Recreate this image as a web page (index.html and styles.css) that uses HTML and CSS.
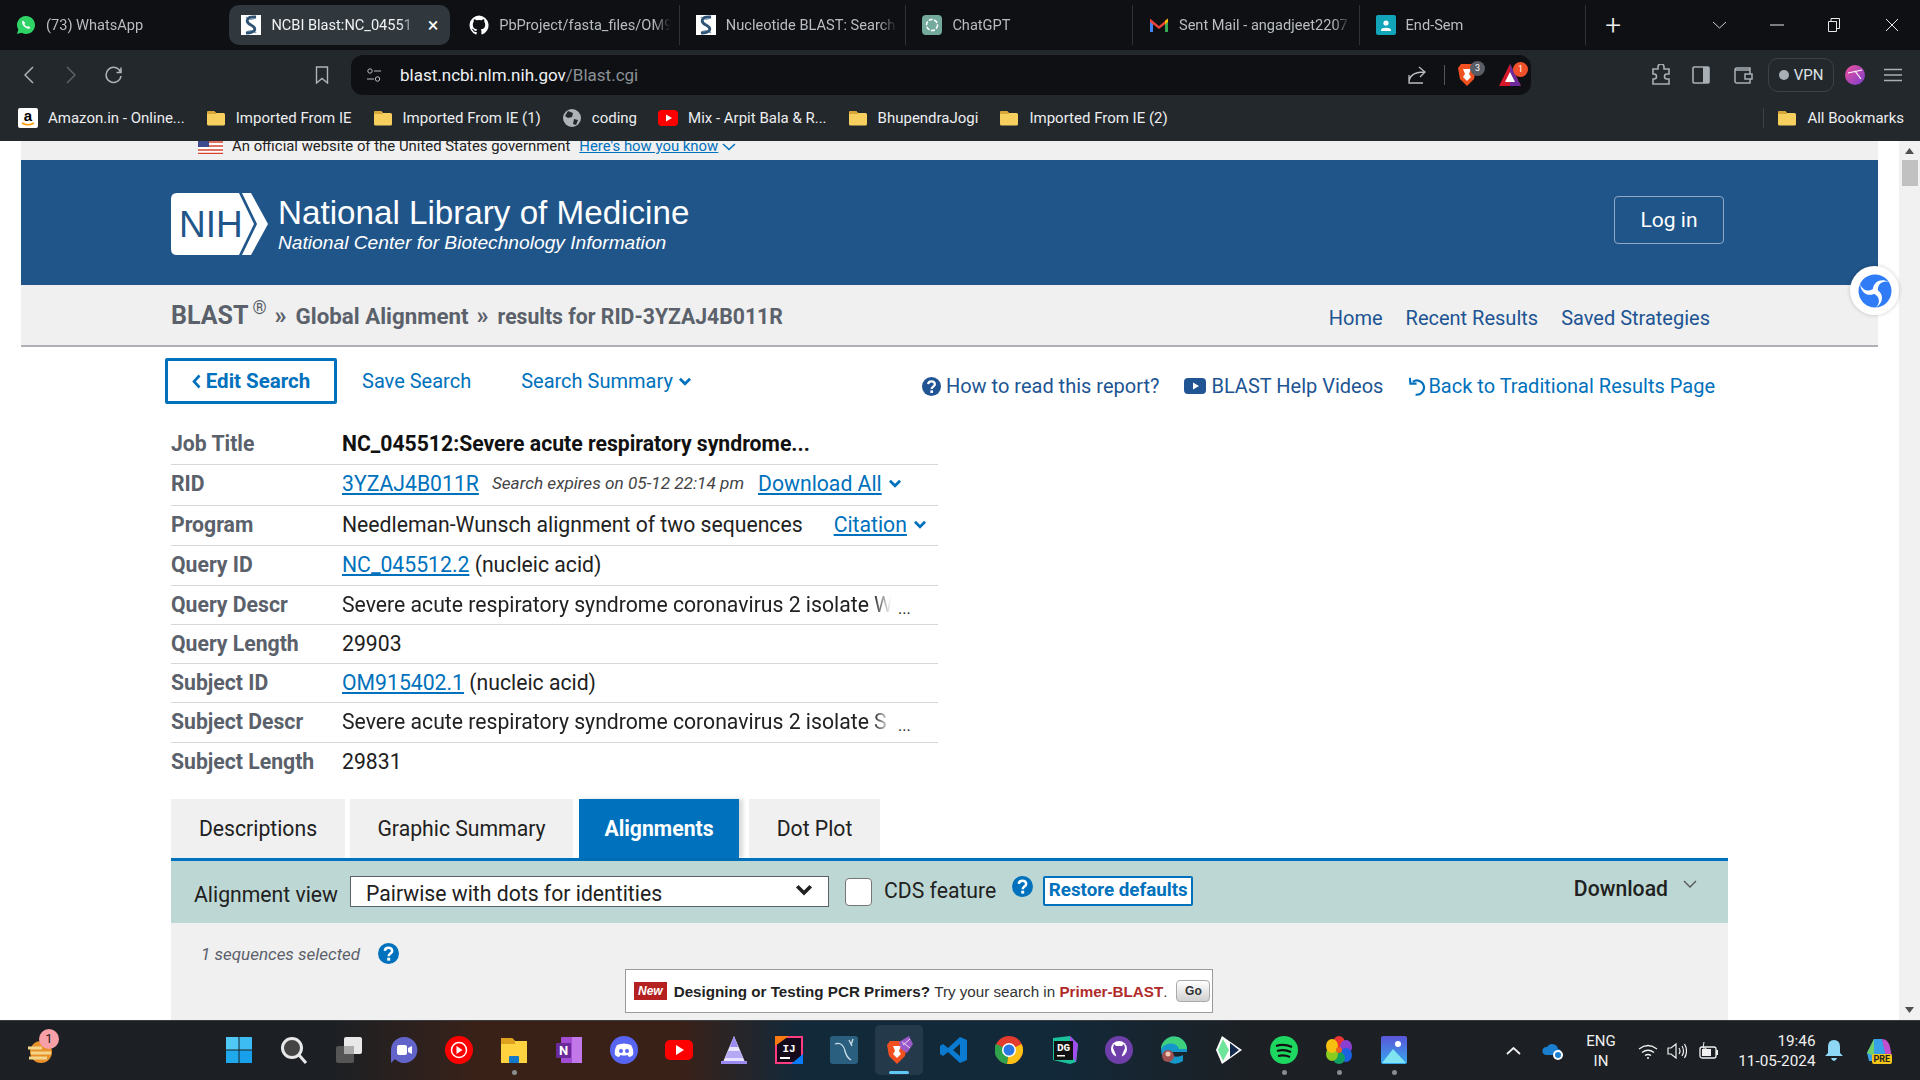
FILE: index.html
```html
<!DOCTYPE html>
<html lang="en">

<head>
    <meta charset="UTF-8">
    <title>NCBI Blast:NC_045512</title>
    <link rel="stylesheet" href="styles.css">
</head>

<body>
    <svg class="defs" width="0" height="0">
        <symbol id="dna" viewBox="0 0 20 20">
            <rect width="20" height="20" fill="#fff"/>
            <path d="M5 2C8 5 12 5 15 2M5 18C8 15 12 15 15 18" fill="none" stroke="#8aa0b4" stroke-width="1.600"/>
            <path d="M15 2C5 1 4 7 10 10S15 18 5 18" fill="none" stroke="#2f5475" stroke-width="2.800"/>
        </symbol>
        <symbol id="folder" viewBox="0 0 20 20">
            <path d="M1 4.500Q1 3 2.500 3H8l2 2h7.500Q19 5 19 6.500V16q0 1.500-1.500 1.500h-15Q1 17.500 1 16Z" fill="#f6cf5f"/>
            <path d="M1 4.500Q1 3 2.500 3H8l2 2v1H1Z" fill="#d9a63a"/>
        </symbol>
        <symbol id="help" viewBox="0 0 20 20">
            <circle cx="10" cy="10" r="10" fill="currentColor"/>
            <path d="M6.500 7.500C6.700 3.500 13.500 3.500 13.500 7.500c0 2.600-3.300 2.600-3.300 5" fill="none" stroke="#fff" stroke-width="2.400"/>
            <rect x="8.800" y="14" width="2.800" height="2.800" fill="#fff"/>
        </symbol>
        <symbol id="chev" viewBox="0 0 12 8">
            <path d="M1.500 1.500 6 6l4.500-4.500" fill="none" stroke="currentColor" stroke-width="2.400"/>
        </symbol>
    </svg>

    <!-- browser tabs -->
    <div class="tabstrip">
        <div class="tab">
            <svg class="tab-icon" viewBox="0 0 20 20"><path d="M10 1a9 9 0 0 0-7.700 13.600L1 19l4.500-1.200A9 9 0 1 0 10 1Z" fill="#2fd366"/><path d="M7 5.500c-2 1.500-.5 4.500 1.500 6.300s4.500 3 6 .9l-2.200-1.700-1.200.8c-1-.4-2.200-1.500-2.700-2.800l.9-1.100Z" fill="#fff"/></svg>
            <span class="tab-title">(73) WhatsApp</span>
        </div>
        <div class="tab tab-active">
            <svg class="tab-icon"><use href="#dna"/></svg>
            <span class="tab-title">NCBI Blast:NC_04551</span>
            <span class="tab-close">×</span>
        </div>
        <div class="tab tab-sep">
            <svg class="tab-icon" viewBox="0 0 20 20"><path d="M10 .5a9.800 9.800 0 0 0-3 19c.5.100.7-.2.700-.5v-2c-2.700.6-3.300-1.200-3.300-1.200-.5-1.100-1.100-1.400-1.100-1.400-.9-.6 0-.6 0-.6 1 .1 1.500 1 1.500 1 .9 1.500 2.300 1.100 2.900.8.100-.6.300-1.100.6-1.300-2.200-.3-4.500-1.100-4.500-4.900 0-1.100.4-2 1-2.600-.1-.3-.4-1.300.1-2.600 0 0 .8-.3 2.700 1a9.300 9.300 0 0 1 4.800 0c1.900-1.300 2.700-1 2.700-1 .5 1.300.2 2.300.1 2.600.6.700 1 1.500 1 2.600 0 3.800-2.300 4.600-4.500 4.900.4.300.7.900.7 1.800V19c0 .3.200.6.700.5A9.800 9.800 0 0 0 10 .5Z" fill="#fff"/></svg>
            <span class="tab-title">PbProject/fasta_files/OM9</span>
        </div>
        <div class="tab tab-sep">
            <svg class="tab-icon"><use href="#dna"/></svg>
            <span class="tab-title">Nucleotide BLAST: Search</span>
        </div>
        <div class="tab tab-sep">
            <svg class="tab-icon" viewBox="0 0 20 20"><rect width="20" height="20" rx="4" fill="#74aa9c"/><circle cx="10" cy="10" r="5.500" fill="none" stroke="#fff" stroke-width="1.500" stroke-dasharray="4 1.500"/></svg>
            <span class="tab-title">ChatGPT</span>
        </div>
        <div class="tab tab-sep">
            <svg class="tab-icon" viewBox="0 0 20 20"><path d="M1 17V5l3 1v11Z" fill="#4285f4"/><path d="M16 17V6l3-1v12Z" fill="#34a853"/><path d="M1 3.500 10 11l9-7.500V7l-9 7-9-7Z" fill="#ea4335"/><path d="M16 5.800 19 3.500V7l-3 2.300Z" fill="#fbbc04"/></svg>
            <span class="tab-title">Sent Mail - angadjeet2207</span>
        </div>
        <div class="tab tab-sep">
            <svg class="tab-icon" viewBox="0 0 20 20"><rect width="20" height="20" rx="2" fill="#12a4b8"/><circle cx="10" cy="8" r="2.600" fill="#fff"/><path d="M5 15c0-3 10-3 10 0v1H5Z" fill="#fff"/></svg>
            <span class="tab-title">End-Sem</span>
        </div>
        <div class="tab-plus">+</div>
        <div class="win-controls">
            <svg class="win-chev" width="15" height="8" viewBox="0 0 15 8"><path d="M1 1l6.500 6L14 1" fill="none" stroke="#c8ccd0"/></svg>
            <svg class="win-min" width="14" height="2" viewBox="0 0 14 2"><path d="M0 1h14" stroke="#e8e8e8"/></svg>
            <svg class="win-max" width="14" height="14" viewBox="0 0 14 14"><path d="M1.500 3.500h8v10h-8ZM4 3.500v-3h8.500v10h-3" fill="none" stroke="#e8e8e8"/></svg>
            <svg class="win-x" width="14" height="14" viewBox="0 0 14 14"><path d="M1 1l12 12M13 1 1 13" stroke="#e8e8e8"/></svg>
        </div>
    </div>

    <!-- toolbar -->
    <div class="toolbar">
        <svg class="tool-back" width="10" height="18" viewBox="0 0 10 18"><path d="M9 1 1 9l8 8" fill="none" stroke="#aeb4b9" stroke-width="1.500"/></svg>
        <svg class="tool-fwd" width="10" height="18" viewBox="0 0 10 18"><path d="M1 1l8 8-8 8" fill="none" stroke="#5d6368" stroke-width="1.500"/></svg>
        <svg class="tool-reload" width="18" height="18" viewBox="0 0 18 18"><path d="M15.500 6A7.500 7.500 0 1 0 16 10M16 1.500V6.500H11.500" fill="none" stroke="#aeb4b9" stroke-width="1.500"/></svg>
        <svg class="tool-mark" width="14" height="18" viewBox="0 0 14 18"><path d="M1.500 1h11v16L7 12.500 1.500 17Z" fill="none" stroke="#aeb4b9" stroke-width="1.400"/></svg>
        <div class="omnibox">
            <svg class="omni-tune" width="16" height="16" viewBox="0 0 16 16"><circle cx="4" cy="4" r="2.200" fill="none" stroke="#b8bcc0"/><path d="M8 4h7M1 12h7" stroke="#b8bcc0"/><circle cx="11.500" cy="12" r="2.200" fill="none" stroke="#b8bcc0"/></svg>
            <span class="omni-url">blast.ncbi.nlm.nih.gov<span class="omni-path">/Blast.cgi</span></span>
            <svg class="omni-share" width="20" height="20" viewBox="0 0 20 20"><path d="M2 10v8h14M2 18c0-7 5-11 15-11M12 2l6 5-5 5" fill="none" stroke="#b8bcc0" stroke-width="1.300"/></svg>
            <span class="omni-sep"></span>
            <span class="ext ext-brave">
                <svg width="20" height="26" viewBox="0 0 20 26"><path d="M4 2h12l3 4-2 11-7 7-7-7L1 6Z" fill="#f1501f"/><path d="M6 7h8l-2 5 2 3-4 4-4-4 2-3Z" fill="#fff"/></svg>
                <span class="badge badge-gray">3</span>
            </span>
            <span class="ext ext-rewards">
                <svg width="22" height="24" viewBox="0 0 22 24"><path d="M11 1 22 23H0Z" fill="#d6182c"/><path d="M11 1 22 23H11Z" fill="#6d2a9c"/><path d="M11 9l5 10H6Z" fill="#fff"/></svg>
                <span class="badge badge-red">1</span>
            </span>
        </div>
        <svg class="tool-puzzle" width="20" height="22" viewBox="0 0 20 22"><path d="M7 3a3 3 0 0 1 6 0v2h5v5h-2a2.500 2.500 0 0 0 0 5h2v5H2v-5h1a2.500 2.500 0 0 0 0-5H2V5h5Z" fill="none" stroke="#a8b0b6" stroke-width="1.600"/></svg>
        <svg class="tool-side" width="18" height="18" viewBox="0 0 18 18"><rect x="1" y="1" width="16" height="16" rx="1" fill="none" stroke="#a8b0b6" stroke-width="1.600"/><rect x="11" y="1" width="6" height="16" fill="#a8b0b6"/></svg>
        <svg class="tool-wallet" width="19" height="18" viewBox="0 0 19 18"><path d="M16 4V2H3Q1 2 1 4v11q0 2 2 2h13v-4M1 4h15v4M11 8h7v5h-7Z" fill="none" stroke="#a8b0b6" stroke-width="1.500"/></svg>
        <div class="vpn"><span class="vpn-dot"></span>VPN</div>
        <svg class="tool-avatar" width="20" height="20" viewBox="0 0 20 20"><defs><linearGradient id="ava" x1="0" y1="0" x2="1" y2="1"><stop offset="0" stop-color="#f0509a"/><stop offset="1" stop-color="#7a3fd0"/></linearGradient></defs><circle cx="10" cy="10" r="10" fill="url(#ava)"/><path d="M3 8l14-3M10 6l6 8" stroke="#fff" stroke-width="1.200"/></svg>
        <svg class="tool-menu" width="18" height="14" viewBox="0 0 18 14"><path d="M0 1.500h18M0 7h18M0 12.500h18" stroke="#a8b0b6" stroke-width="1.500"/></svg>
    </div>

    <!-- bookmarks -->
    <div class="bookmarks">
        <div class="bm bm-first">
            <svg class="bm-icon" viewBox="0 0 20 20"><rect width="20" height="20" rx="2" fill="#fff"/><text x="10" y="13" text-anchor="middle" class="bm-a">a</text><path d="M4 15q6 3.500 12 0" fill="none" stroke="#f90" stroke-width="1.500"/></svg>
            Amazon.in - Online...
        </div>
        <div class="bm"><svg class="bm-icon"><use href="#folder"/></svg>Imported From IE</div>
        <div class="bm"><svg class="bm-icon"><use href="#folder"/></svg>Imported From IE (1)</div>
        <div class="bm">
            <svg class="bm-icon" viewBox="0 0 20 20"><circle cx="10" cy="10" r="9" fill="#aeb3b8"/><path d="M6 3l5 2-1 4-4 1-3-2ZM12 11l4 1-2 5-3-1Z" fill="#23282c"/></svg>
            coding
        </div>
        <div class="bm">
            <svg class="bm-icon" viewBox="0 0 20 20"><rect y="2" width="20" height="16" rx="4" fill="#f00"/><path d="M8 6.500 14 10l-6 3.500Z" fill="#fff"/></svg>
            Mix - Arpit Bala &amp; R...
        </div>
        <div class="bm"><svg class="bm-icon"><use href="#folder"/></svg>BhupendraJogi</div>
        <div class="bm"><svg class="bm-icon"><use href="#folder"/></svg>Imported From IE (2)</div>
        <div class="bm bm-all"><svg class="bm-icon"><use href="#folder"/></svg>All Bookmarks</div>
    </div>

    <div class="viewport">
        <div class="page">
            <div class="gov-banner">
                <svg width="25" height="13" viewBox="0 0 25 13"><rect width="25" height="13" fill="#fff"/><path d="M0 1h25M0 5h25M0 9h25M0 12.500h25" stroke="#d8402f" stroke-width="1.600"/><rect width="11" height="6" fill="#3c4a90"/></svg>
                <span>An official website of the United States government</span>
                <a class="gov-link">Here's how you know</a>
                <svg class="gov-chev" width="14" height="8" viewBox="0 0 14 8"><path d="M1 1l6 5.500L13 1" fill="none" stroke="currentColor" stroke-width="1.500"/></svg>
            </div>

            <div class="nih-header">
                <div class="nih-logo">
                    <svg width="98" height="62" viewBox="0 0 98 62">
                        <path d="M6 0H68L83 31 68 62H6Q0 62 0 56V6Q0 0 6 0Z" fill="#fff"/>
                        <path d="M71 0H80L97 31 80 62H71L86 31Z" fill="#fff"/>
                        <text x="8" y="44" class="nih-mark">NIH</text>
                    </svg>
                    <div class="nih-names">
                        <div class="nih-title">National Library of Medicine</div>
                        <div class="nih-sub">National Center for Biotechnology Information</div>
                    </div>
                </div>
                <button class="login">Log in</button>
            </div>

            <div class="crumbs">
                <div class="crumb-text">
                    <span class="crumb-blast">BLAST</span><sup class="crumb-reg">®</sup>
                    <span class="crumb-sep">»</span>
                    <span class="crumb-page">Global Alignment</span>
                    <span class="crumb-sep">»</span>
                    <span class="crumb-rid">results for RID-3YZAJ4B011R</span>
                </div>
                <nav class="crumb-nav">
                    <a>Home</a>
                    <a>Recent Results</a>
                    <a>Saved Strategies</a>
                </nav>
            </div>

            <div class="actions">
                <div class="actions-left">
                    <a class="edit-btn"><svg width="9" height="15" viewBox="0 0 9 15"><path d="M7.500 1.500 2 7.500l5.500 6" fill="none" stroke="currentColor" stroke-width="2.600"/></svg>Edit Search</a>
                    <a class="act-link act-save">Save Search</a>
                    <a class="act-link act-summary">Search Summary <svg class="summary-chev" width="14" height="9"><use href="#chev"/></svg></a>
                </div>
                <div class="actions-right">
                    <a class="help-link"><svg class="ico-help" width="19" height="19"><use href="#help"/></svg>How to read this report?</a>
                    <a class="help-link"><svg class="ico-play" width="22" height="16" viewBox="0 0 22 16"><rect width="22" height="16" rx="4" fill="currentColor"/><path d="M9 4.500 15 8l-6 3.500Z" fill="#fff"/></svg>BLAST Help Videos</a>
                    <a class="help-link back-link"><svg width="20" height="21" viewBox="0 0 21 21"><path d="M5 5.500A7.500 7.500 0 1 1 8 19M2 1.500 2.500 7.500H9" fill="none" stroke="currentColor" stroke-width="2.200"/></svg>Back to Traditional Results Page</a>
                </div>
            </div>

            <div class="summary">
                <div class="row row-top"><div class="label">Job Title</div><div class="value value-title">NC_045512:Severe acute respiratory syndrome...</div></div>
                <div class="row row-l">
                    <div class="label">RID</div>
                    <div class="value"><a class="link">3YZAJ4B011R</a><span class="expires">Search expires on 05-12 22:14 pm</span><a class="link">Download All</a><svg class="link-chev" width="14" height="9"><use href="#chev"/></svg></div>
                </div>
                <div class="row row-m">
                    <div class="label">Program</div>
                    <div class="value"><span>Needleman-Wunsch alignment of two sequences</span><a class="link link-citation">Citation</a><svg class="link-chev" width="14" height="9"><use href="#chev"/></svg></div>
                </div>
                <div class="row row-m"><div class="label">Query ID</div><div class="value"><a class="link">NC_045512.2</a><span>&nbsp;(nucleic acid)</span></div></div>
                <div class="row">
                    <div class="label">Query Descr</div>
                    <div class="value"><span class="fade">Severe acute respiratory syndrome coronavirus 2 isolate W</span><span class="dots">...</span></div>
                </div>
                <div class="row"><div class="label">Query Length</div><div class="value">29903</div></div>
                <div class="row"><div class="label">Subject ID</div><div class="value"><a class="link">OM915402.1</a><span>&nbsp;(nucleic acid)</span></div></div>
                <div class="row row-m">
                    <div class="label">Subject Descr</div>
                    <div class="value"><span class="fade">Severe acute respiratory syndrome coronavirus 2 isolate S</span><span class="dots">...</span></div>
                </div>
                <div class="row row-last"><div class="label">Subject Length</div><div class="value">29831</div></div>
            </div>

            <div class="results">
                <div class="result-tabs">
                    <div class="rtab rtab-desc">Descriptions</div>
                    <div class="rtab rtab-graphic">Graphic Summary</div>
                    <div class="rtab rtab-align">Alignments</div>
                    <div class="rtab rtab-dot">Dot Plot</div>
                </div>
                <div class="view-bar">
                    <span class="view-label">Alignment view</span>
                    <div class="view-select"><span>Pairwise with dots for identities</span><svg width="18" height="12" viewBox="0 0 12 8"><use href="#chev"/></svg></div>
                    <span class="view-check"></span>
                    <span class="view-cds">CDS feature</span>
                    <svg class="view-help" width="21" height="21"><use href="#help"/></svg>
                    <a class="restore">Restore defaults</a>
                    <span class="view-download">Download</span>
                    <svg class="view-chev" width="14" height="8" viewBox="0 0 14 8"><path d="M1 1l6 6 6-6" fill="none" stroke="#555" stroke-width="1.300"/></svg>
                </div>
                <div class="result-body">
                    <div class="selected">
                        <em>1 sequences selected</em>
                        <svg class="sel-help" width="21" height="21"><use href="#help"/></svg>
                    </div>
                    <div class="promo"><span class="promo-new">New</span><b>Designing or Testing PCR Primers?</b><span>&nbsp;Try your search in&nbsp;</span><b class="promo-red">Primer-BLAST</b><span>.</span><span class="promo-go">Go</span></div>
                </div>
            </div>
        </div>

        <div class="scrollbar">
            <svg width="9" height="6" viewBox="0 0 9 6"><path d="M4.500 0 9 6H0Z" fill="#505050"/></svg>
            <div class="scroll-thumb"></div>
            <svg class="scroll-down" width="9" height="6" viewBox="0 0 9 6"><path d="M0 0h9L4.500 6Z" fill="#505050"/></svg>
        </div>

        <div class="float-btn">
            <svg width="34" height="34" viewBox="0 0 34 34">
                <circle cx="17" cy="17" r="16.500" fill="#2f7cf6"/>
                <path id="swirl" d="M15 17C14 9 22 3 31 8 25 6 19 10 20 17Z" fill="#fff"/>
                <path d="M15 17C14 9 22 3 31 8 25 6 19 10 20 17Z" fill="#fff" transform="rotate(120 17 17)"/>
                <path d="M15 17C14 9 22 3 31 8 25 6 19 10 20 17Z" fill="#fff" transform="rotate(240 17 17)"/>
            </svg>
        </div>
    </div>

    <!-- windows taskbar -->
    <div class="taskbar">
        <div class="widget">
            <svg width="30" height="28" viewBox="0 0 30 28"><circle cx="16" cy="17" r="11" fill="#e8912b"/><path d="M3 13h14M6 18h20M4 23h18" stroke="#f4d58c" stroke-width="3"/></svg>
            <span class="badge badge-pink">1</span>
        </div>
        <div class="tb-icons">
            <div class="tb-item"><svg viewBox="0 0 28 28"><rect x="1" y="1" width="12.500" height="12.500" fill="#4fc8f5"/><rect x="14.500" y="1" width="12.500" height="12.500" fill="#3cbcf2"/><rect x="1" y="14.500" width="12.500" height="12.500" fill="#20a8ec"/><rect x="14.500" y="14.500" width="12.500" height="12.500" fill="#18a0ea"/></svg></div>
            <div class="tb-item"><svg viewBox="0 0 28 28"><circle cx="12" cy="12" r="9.500" fill="#444" stroke="#e8e8e8" stroke-width="3"/><path d="M19 19l7 8" stroke="#e8e8e8" stroke-width="3"/></svg></div>
            <div class="tb-item"><svg viewBox="0 0 28 28"><rect x="1" y="10" width="18" height="17" rx="2" fill="#555"/><rect x="9" y="1" width="18" height="17" rx="2" fill="#e8e8e8"/><rect x="9" y="10" width="10" height="8" fill="#aaa"/></svg></div>
            <div class="tb-item"><svg viewBox="0 0 28 28"><path d="M14 1a13 13 0 1 1-9 22l-4 4V14A13 13 0 0 1 14 1Z" fill="#6264c9"/><rect x="7" y="9" width="10" height="10" rx="2" fill="#fff"/><path d="M18 12l4-2v8l-4-2Z" fill="#fff"/></svg></div>
            <div class="tb-item"><svg viewBox="0 0 28 28"><circle cx="14" cy="14" r="14" fill="#f00"/><circle cx="14" cy="14" r="7.500" fill="none" stroke="#fff" stroke-width="1.500"/><path d="M11.500 10l6 4-6 4Z" fill="#fff"/></svg></div>
            <div class="tb-item"><svg viewBox="0 0 28 28"><path d="M1 2h11l3 3h12v22H1Z" fill="#ffd23f"/><path d="M1 2h11l3 3v3H1Z" fill="#e0a020"/><rect x="9" y="20" width="10" height="7" rx="1" fill="#1478c8"/></svg><span class="tb-dot"></span></div>
            <div class="tb-item"><svg viewBox="0 0 28 28"><rect x="6" y="1" width="21" height="26" rx="1" fill="#a44cd3"/><rect x="17" y="1" width="10" height="26" fill="#c278e8"/><rect x="1" y="7" width="15" height="15" rx="1" fill="#6a2a9a"/><text x="8.500" y="19" text-anchor="middle" class="tb-letter">N</text></svg></div>
            <div class="tb-item"><svg viewBox="0 0 28 28"><circle cx="14" cy="14" r="14" fill="#5865f2"/><path d="M7 9q7-3 14 0 3 5 2 10-2 2-4 2l-1.500-2q-3.500 1-7 0L9 21q-2 0-4-2-1-5 2-10Z" fill="#fff"/><circle cx="11" cy="15" r="2" fill="#5865f2"/><circle cx="17" cy="15" r="2" fill="#5865f2"/></svg></div>
            <div class="tb-item"><svg viewBox="0 0 28 28"><rect x="0" y="4" width="28" height="20" rx="5" fill="#f00"/><path d="M11 9l8 5-8 5Z" fill="#fff"/></svg></div>
            <div class="tb-item"><svg viewBox="0 0 28 28"><path d="M14 0 25 26H3Z" fill="#e8e4ff"/><path d="M14 0 18 11H10Z" fill="#9b8bf0"/><path d="M8 15h12l3 7H5Z" fill="#b5a8f5"/><rect x="1" y="25" width="26" height="3" fill="#9b8bf0"/></svg></div>
            <div class="tb-item"><svg viewBox="0 0 28 28"><rect width="28" height="28" fill="#ff3c80"/><rect x="2" y="2" width="24" height="24" fill="#15091c"/><path d="M0 10V0h14Z" fill="#f97a12"/><path d="M28 18v10H16Z" fill="#087cfa"/><rect x="5" y="21" width="10" height="2" fill="#fff"/><text x="14" y="16" text-anchor="middle" class="tb-mono">IJ</text></svg></div>
            <div class="tb-item"><svg viewBox="0 0 28 28"><rect width="28" height="28" rx="3" fill="#2a5f7f"/><path d="M5 8c6-2 9 2 10 7s3 7 6 9M19 4l3 6M23 3l-2 6" fill="none" stroke="#cfe0ea" stroke-width="1.300"/></svg></div>
            <div class="tb-item tb-active"><svg viewBox="0 0 28 28"><path d="M5 5h14l3 4-2 11-8 8-8-8-2-11Z" fill="#f1501f"/><path d="M8 10h8l-2 5 2 3-4 4-4-4 2-3Z" fill="#fff"/><path d="M14 6 24 0l4 8-6 9-6-4Z" fill="#9a59c8"/><path d="M17 6l8 6M25 3l-7 6" stroke="#e8d6f5"/></svg><span class="tb-bar"></span></div>
            <div class="tb-item"><svg viewBox="0 0 28 28"><path d="M20 1 27 4v20l-7 3L8 16l-5 4-3-2V10l3-2 5 4Zm0 7-7 6 7 6Z" fill="#0a7bd0"/></svg></div>
            <div class="tb-item"><svg viewBox="0 0 28 28"><circle cx="14" cy="14" r="14" fill="#e33b2e"/><path d="M14 14 26.500 8A14 14 0 0 1 12 28Z" fill="#fbc116"/><path d="M14 14 12 28A14 14 0 0 1 1 8Z" fill="#2fa24c"/><circle cx="14" cy="14" r="7" fill="#fff"/><circle cx="14" cy="14" r="5.500" fill="#2b78e4"/></svg></div>
            <div class="tb-item"><svg viewBox="0 0 28 28"><path d="M3 2 20 0l8 8-2 18-6 2L3 24Z" fill="#19c29a"/><path d="M20 0l8 8-2 18-6-8Z" fill="#a24cf0"/><rect x="4" y="5" width="19" height="19" fill="#111"/><text x="13.500" y="15" text-anchor="middle" class="tb-mono">DG</text><rect x="7" y="19" width="8" height="1.500" fill="#fff"/></svg></div>
            <div class="tb-item"><svg viewBox="0 0 28 28"><circle cx="14" cy="14" r="14" fill="#6e3fa8"/><circle cx="14" cy="13" r="8" fill="#fff"/><path d="M9 8l2 2h6l2-2 1 4-3 7v5h-6v-5l-3-7Z" fill="#6e3fa8"/></svg></div>
            <div class="tb-item"><svg viewBox="0 0 28 28"><path d="M1 14A13 13 0 0 1 27 13v3H10c1 5 8 6 13 3v6A14 14 0 0 1 1 14Z" fill="#1598c9"/><path d="M1 14C3 6 17 5 19 13H27A13 13 0 0 0 1 14Z" fill="#3fd07e"/><circle cx="8" cy="20" r="6" fill="#a05050"/><circle cx="8" cy="18" r="2.500" fill="#f0c8b0"/></svg></div>
            <div class="tb-item"><svg viewBox="0 0 28 28"><path d="M7 0 27 14 7 28 1 14Z" fill="#fff"/><path d="M8 3 14 14 8 25 3 14Z" fill="#6ee59a"/><path d="M15 7 24 14 15 21Z" fill="#13294b"/></svg></div>
            <div class="tb-item"><svg viewBox="0 0 28 28"><circle cx="14" cy="14" r="14" fill="#1ed760"/><path d="M6 10q8-2.500 16 1M7 15q7-2 14 1M8 20q6-1.500 12 1" fill="none" stroke="#111" stroke-width="2.300"/></svg><span class="tb-dot"></span></div>
            <div class="tb-item"><svg viewBox="0 0 28 28"><ellipse cx="14" cy="7" rx="6" ry="7" fill="#e33"/><ellipse cx="21" cy="11" rx="6" ry="7" fill="#8a3fd0"/><ellipse cx="21" cy="19" rx="6" ry="7" fill="#1a62e0"/><ellipse cx="14" cy="22" rx="6" ry="6" fill="#10a060"/><ellipse cx="7" cy="18" rx="6" ry="7" fill="#8acb20"/><ellipse cx="7" cy="10" rx="6" ry="7" fill="#f8c010"/><circle cx="14" cy="14" r="3" fill="#f06020"/></svg><span class="tb-dot"></span></div>
            <div class="tb-item"><svg viewBox="0 0 28 28"><defs><linearGradient id="pics" x1="0" y1="0" x2="0" y2="1"><stop offset="0" stop-color="#5a55d8"/><stop offset="1" stop-color="#35a8ee"/></linearGradient></defs><rect x="1" y="0" width="26" height="28" rx="2" fill="url(#pics)"/><circle cx="18" cy="8" r="3" fill="#fff"/><path d="M2 27 13 13l13 14Z" fill="#7fe3f2"/></svg><span class="tb-dot"></span></div>
        </div>
        <div class="tray">
            <svg class="tray-caret" width="15" height="9" viewBox="0 0 15 9"><path d="M1 8l6.500-6L14 8" fill="none" stroke="#f0f0f0" stroke-width="1.800"/></svg>
            <svg class="tray-cloud" width="22" height="20" viewBox="0 0 22 20"><path d="M4 14a4 4 0 0 1 1-8 6 6 0 0 1 11 2 3 3 0 0 1 0 6Z" fill="#1b7fd0"/><circle cx="16" cy="14" r="5" fill="#fff"/><circle cx="16" cy="14" r="3" fill="#1b7fd0"/></svg>
            <div class="tray-lang"><span>ENG</span><span>IN</span></div>
            <svg class="tray-wifi" width="20" height="16" viewBox="0 0 20 16"><path d="M1 6q9-7 18 0M4 9.500q6-4.500 12 0M7 12.500q3-2 6 0" fill="none" stroke="#f0f0f0" stroke-width="1.400"/><circle cx="10" cy="15" r="1" fill="#f0f0f0"/></svg>
            <svg class="tray-vol" width="20" height="18" viewBox="0 0 20 18"><path d="M1 6h3l5-4v14l-5-4H1ZM12 6q2 3 0 6M15 4q3 5 0 10M17.500 2q4 7 0 14" fill="none" stroke="#f0f0f0" stroke-width="1.200"/></svg>
            <svg class="tray-bat" width="20" height="18" viewBox="0 0 20 18"><rect x="1" y="5" width="16" height="11" rx="2" fill="none" stroke="#f0f0f0" stroke-width="1.300"/><rect x="3" y="7" width="9" height="7" fill="#f0f0f0"/><path d="M18 8v5" stroke="#f0f0f0" stroke-width="2"/><path d="M5 0l-1 6h3l-1 5" fill="none" stroke="#f0f0f0"/></svg>
            <div class="tray-clock"><span>19:46</span><span>11-05-2024</span></div>
            <svg class="tray-bell" width="18" height="21" viewBox="0 0 18 21"><path d="M9 0q6 0 6 7v6l3 3H0l3-3V7q0-7 6-7Z" fill="#8fd8f5"/><path d="M6 18h6q-1 3-3 3t-3-3Z" fill="#8fd8f5"/></svg>
            <div class="tray-copilot">
                <svg width="28" height="24" viewBox="0 0 28 24"><path d="M8 0h8l4 14-8 8H3L1 14Z" fill="#37a0e8"/><path d="M16 0q6 0 8 8l2 10h-6Z" fill="#c24fd0"/><path d="M8 0l-7 14 7 3Z" fill="#6fd06a"/></svg>
                <span class="pre">PRE</span>
            </div>
        </div>
    </div>
</body>

</html>
```

FILE: styles.css
```css
* {
    box-sizing: border-box;
}

body {
    margin: 0;
    width: 1920px;
    height: 1080px;
    overflow: hidden;
    display: flex;
    flex-direction: column;
    font-family: 'Roboto', sans-serif;
    background-color: #fff;
}

.defs {
    position: absolute;
}

/* browser chrome */
.tabstrip {
    height: 50px;
    background-color: #0e1014;
    display: flex;
    align-items: center;
    color: #b9bdc1;
    font-size: 14.6px;
}

.tab {
    width: 226.6px;
    height: 40px;
    padding-left: 16px;
    padding-right: 8px;
    display: flex;
    align-items: center;
    gap: 10px;
    flex-shrink: 0;
}

.tab-sep {
    border-right: 1px solid #2d3236;
}

.tab-active {
    background-color: #30383d;
    border-radius: 10px;
    width: 221px;
    margin: 0 2.800px;
    padding-left: 12px;
    padding-right: 12px;
    color: #f0f2f3;
}

.tab-icon {
    width: 20px;
    height: 20px;
    flex-shrink: 0;
}

.tab-title {
    flex: 1;
    overflow: hidden;
    white-space: nowrap;
    -webkit-mask-image: linear-gradient(to left, transparent, #000 18px);
    mask-image: linear-gradient(to left, transparent, #000 18px);
}

.tab-close {
    font-size: 20px;
    color: #fff;
    line-height: 1;
}

.tab-plus {
    color: #eee;
    font-size: 28px;
    font-weight: 300;
    margin-left: 16px;
    width: 22px;
    text-align: center;
}

.win-controls {
    display: flex;
    align-items: center;
    margin-left: 88px;
}

.win-min {
    margin-left: 43px;
}

.win-max {
    margin-left: 43px;
}

.win-x {
    margin-left: 44px;
}

.toolbar {
    height: 50px;
    background-color: #23282c;
    display: flex;
    align-items: center;
}

.tool-back {
    margin-left: 24px;
}

.tool-fwd {
    margin-left: 32px;
}

.tool-reload {
    margin-left: 29px;
}

.tool-mark {
    margin-left: 192px;
}

.omnibox {
    width: 1180px;
    height: 40px;
    margin-left: 22px;
    background-color: #0e1014;
    border-radius: 12px;
    display: flex;
    align-items: center;
    padding-left: 15px;
}

.omni-url {
    margin-left: 18px;
    color: #f0f2f3;
    font-size: 17px;
}

.omni-path {
    color: #8b9095;
}

.omni-share {
    margin-left: auto;
}

.omni-sep {
    width: 1px;
    height: 20px;
    background-color: #555;
    margin-left: 17px;
}

.ext {
    position: relative;
    display: flex;
}

.ext-brave {
    margin-left: 12px;
}

.ext-rewards {
    margin-left: 22px;
    margin-right: 10px;
}

.badge {
    position: absolute;
    border-radius: 50%;
    color: #fff;
    font-size: 9px;
    text-align: center;
}

.badge-gray {
    top: -1px;
    right: -8px;
    width: 15px;
    height: 15px;
    line-height: 15px;
    background-color: #5a5d66;
}

.badge-red {
    top: -1px;
    right: -7px;
    width: 15px;
    height: 15px;
    line-height: 15px;
    background-color: #f0502a;
}

.tool-puzzle {
    margin-left: 120px;
}

.tool-side {
    margin-left: 21px;
}

.tool-wallet {
    margin-left: 24px;
}

.vpn {
    width: 66px;
    height: 34px;
    margin-left: 15px;
    border: 1px solid #3c4246;
    border-radius: 10px;
    display: flex;
    align-items: center;
    justify-content: center;
    gap: 5px;
    color: #dfe3e6;
    font-size: 15px;
}

.vpn-dot {
    width: 10px;
    height: 10px;
    border-radius: 50%;
    background-color: #a8b0b6;
}

.tool-avatar {
    margin-left: 11px;
}

.tool-menu {
    margin-left: 19px;
}

.bookmarks {
    height: 41px;
    background-color: #23282c;
    display: flex;
    align-items: center;
    color: #eceef0;
    font-size: 15px;
    padding-left: 18px;
    padding-bottom: 5px;
}

.bm {
    display: flex;
    align-items: center;
    gap: 10px;
    margin-right: 21px;
    white-space: nowrap;
}

.bm-icon {
    width: 20px;
    height: 20px;
    flex-shrink: 0;
}

.bm-a {
    font-family: 'Liberation Sans', sans-serif;
    font-size: 15px;
    font-weight: 700;
}

.bm-all {
    margin-left: auto;
    margin-right: 16px;
    padding-left: 13px;
    border-left: 1px solid #3c4246;
}

/* page area */
.viewport {
    height: 879px;
    display: flex;
    position: relative;
}

.page {
    width: 1899px;
    padding: 0 21px;
    overflow: hidden;
}

.gov-banner {
    height: 19px;
    background-color: #f0f0f0;
    padding-left: 177px;
    display: flex;
    align-items: flex-start;
    gap: 9px;
    font-size: 14.9px;
    line-height: 10px;
    color: #222;
    overflow: hidden;
}

.gov-link {
    color: #0071bc;
    text-decoration: underline;
}

.gov-chev {
    margin-left: -5px;
    margin-top: 2px;
    color: #0071bc;
}

.nih-header {
    height: 125px;
    background-color: #20558a;
    padding: 33px 154px 0 150px;
    display: flex;
    justify-content: space-between;
    align-items: flex-start;
    color: #fff;
}

.nih-logo {
    display: flex;
    gap: 9px;
}

.nih-mark {
    font-family: 'Liberation Sans', sans-serif;
    font-size: 37px;
    fill: #20558a;
}

.nih-names {
    font-family: 'Liberation Sans', sans-serif;
}

.nih-title {
    font-size: 33.2px;
    line-height: 38px;
    margin-top: 1px;
}

.nih-sub {
    font-size: 19.2px;
    font-style: italic;
    line-height: 22px;
}

.login {
    width: 110px;
    height: 48px;
    margin-top: 3px;
    background: none;
    border: 1px solid #8fa9c4;
    border-radius: 4px;
    color: #fff;
    font-family: inherit;
    font-size: 21px;
}

.crumbs {
    height: 62px;
    background-color: #f0f0f0;
    border-bottom: 2px solid #aeb0b5;
    padding: 0 168px 0 150px;
    display: flex;
    justify-content: space-between;
    align-items: center;
}

.crumb-text {
    color: #5b616b;
    font-size: 22px;
    font-weight: 700;
    white-space: nowrap;
    display: flex;
    align-items: baseline;
}

.crumb-blast {
    font-size: 25px;
}

.crumb-reg {
    font-weight: 400;
    font-size: 18px;
    margin-left: 4px;
    line-height: 0;
    position: relative;
    top: -10px;
}

.crumb-sep {
    margin-left: 8px;
    margin-right: 9px;
    font-size: 24px;
}

.crumb-page {
    font-size: 22.3px;
}

.crumb-rid {
    font-size: 21.2px;
}

.crumb-nav {
    display: flex;
    gap: 23px;
    font-size: 20px;
    color: #205493;
    margin-top: 6px;
}

.actions {
    height: 77px;
    padding: 11px 163px 0 144px;
    display: flex;
    justify-content: space-between;
}

.actions-left {
    display: flex;
    align-items: flex-start;
    color: #0071bc;
    font-size: 20px;
}

.edit-btn {
    width: 172px;
    height: 46px;
    border: 3px solid #0071bc;
    border-radius: 2px;
    display: flex;
    align-items: center;
    justify-content: center;
    gap: 5px;
    font-weight: 700;
    font-size: 20.5px;
}

.act-link {
    line-height: 46px;
}

.act-save {
    margin-left: 25px;
}

.act-summary {
    margin-left: 50px;
}

.summary-chev {
    vertical-align: 2px;
}

.actions-right {
    display: flex;
    align-items: center;
    gap: 25px;
    height: 56px;
    font-size: 20px;
    color: #205493;
}

.help-link {
    display: flex;
    align-items: center;
    gap: 5px;
}

.back-link {
    color: #0071bc;
    gap: 0;
}

.summary {
    margin: 0 0 0 150px;
    width: 767px;
    font-size: 21.2px;
    color: #212121;
}

.row {
    height: 39px;
    padding-bottom: 1px;
    display: flex;
    align-items: center;
    border-bottom: 1px solid #d6d7d9;
}

.row-top {
    height: 41px;
}

.row-m {
    height: 40px;
    padding-bottom: 3px;
}

.row-l {
    height: 41px;
    padding-bottom: 4px;
}

.row-last {
    border-bottom: none;
    padding-bottom: 2px;
}

.label {
    width: 171px;
    flex-shrink: 0;
    color: #5b616b;
    font-weight: 700;
    font-size: 21.2px;
}

.value {
    display: flex;
    align-items: center;
    white-space: nowrap;
    flex: 1;
}

.value-title {
    font-weight: 700;
    color: #111;
}

.link {
    color: #0071bc;
    text-decoration: underline;
}

.link-chev {
    color: #0071bc;
    margin-left: 6px;
}

.link-citation {
    margin-left: 31px;
}

.expires {
    font-size: 17.2px;
    font-style: italic;
    color: #444;
    margin: 0 14px 0 13px;
}

.fade {
    width: 549px;
    overflow: hidden;
    -webkit-mask-image: linear-gradient(to left, transparent, #000 18px);
    mask-image: linear-gradient(to left, transparent, #000 18px);
}

.dots {
    margin-left: 7px;
    font-size: 16px;
    margin-top: 8px;
}

.results {
    margin: 17px 0 0 150px;
    width: 1557px;
}

.result-tabs {
    height: 59px;
    display: flex;
    font-size: 21.2px;
    color: #212121;
}

.rtab {
    background-color: #f0f0f0;
    display: flex;
    align-items: center;
    justify-content: center;
}

.rtab-desc {
    width: 174px;
}

.rtab-graphic {
    width: 223px;
    margin-left: 5px;
}

.rtab-align {
    width: 160px;
    margin-left: 6px;
    background-color: #0071bc;
    color: #fff;
    font-weight: 700;
    box-shadow: 4px 0 4px rgba(0, 0, 0, 0.15);
}

.rtab-dot {
    width: 131px;
    margin-left: 10px;
}

.view-bar {
    height: 65px;
    border-top: 3px solid #0071bc;
    background-color: #bdd8d4;
    padding: 15px 0 0 23px;
    display: flex;
    align-items: flex-start;
    font-size: 21.2px;
    color: #212121;
}

.view-label {
    line-height: 38px;
    width: 156px;
}

.view-select {
    width: 479px;
    height: 31px;
    border: 1px solid #5b616b;
    background-color: #fff;
    padding: 4px 15px 0;
    display: flex;
    align-items: center;
    justify-content: space-between;
}

.view-select svg {
    margin-top: -8px;
}

.view-check {
    width: 27px;
    height: 28px;
    margin: 2px 0 0 16px;
    background-color: #fff;
    border: 1px solid #767676;
    border-radius: 4px;
}

.view-cds {
    margin-left: 12px;
    line-height: 30px;
}

.view-help {
    color: #0071bc;
    margin-left: 16px;
}

.restore {
    width: 150px;
    height: 30px;
    margin-left: 10px;
    border: 2px solid #0071bc;
    border-radius: 2px;
    background-color: #fff;
    color: #0071bc;
    font-size: 18.8px;
    font-weight: 700;
    line-height: 25px;
    text-align: center;
    white-space: nowrap;
}

.view-download {
    margin-left: auto;
    font-weight: 500;
    line-height: 25px;
}

.view-chev {
    margin: 4px 31px 0 15px;
}

.result-body {
    height: 97px;
    background-color: #f0f0f0;
    padding: 20px 0 0 30px;
}

.selected {
    display: flex;
    align-items: center;
    font-size: 17px;
    color: #5b616b;
}

.sel-help {
    color: #0071bc;
    margin-left: 18px;
}

.promo {
    width: 588px;
    height: 44px;
    margin: 5px 0 0 424px;
    background-color: #fff;
    border: 1px solid #9a9a9a;
    padding-left: 8px;
    display: flex;
    align-items: center;
    font-size: 15.2px;
    color: #333;
    white-space: nowrap;
    font-family: 'Liberation Sans', sans-serif;
}

.promo b {
    color: #222;
}

.promo-new {
    background-color: #b52020;
    color: #fff;
    font-size: 12px;
    font-weight: 700;
    font-style: italic;
    padding: 2px 4px;
    margin-right: 7px;
}

.promo .promo-red {
    color: #b02a2a;
}

.promo-go {
    margin-left: 9px;
    width: 34px;
    height: 22px;
    border: 1px solid #aaa;
    border-radius: 4px;
    background: linear-gradient(#fff, #d0d0d0);
    font-size: 12px;
    font-weight: 700;
    text-align: center;
    line-height: 20px;
}

.scrollbar {
    width: 21px;
    background-color: #f1f1f1;
    display: flex;
    flex-direction: column;
    align-items: center;
    padding: 7px 0;
}

.scroll-thumb {
    width: 16px;
    height: 26px;
    margin-top: 6px;
    background-color: #c1c1c1;
}

.scroll-down {
    margin-top: auto;
}

.float-btn {
    position: absolute;
    left: 1850px;
    top: 125px;
    width: 49px;
    height: 49px;
    background-color: #fff;
    border-radius: 50%;
    display: flex;
    align-items: center;
    justify-content: center;
    box-shadow: 0 0 4px rgba(0, 0, 0, 0.2);
}

/* taskbar */
.taskbar {
    height: 60px;
    background: linear-gradient(to right, #1c2024 0, #1c2024 330px, #3a2118 480px, #3a2118 680px, #12293a 800px, #12293a 1050px, #1c2024 1250px);
    border-top: 1px solid #3a3d40;
    display: flex;
    color: #f0f0f0;
}

.widget {
    width: 211.5px;
    padding: 14px 0 0 25px;
    position: relative;
}

.badge-pink {
    left: 39px;
    top: 8px;
    width: 20px;
    height: 20px;
    line-height: 20px;
    font-size: 13px;
    color: #222;
    background-color: #f8a0a8;
}

.tb-icons {
    display: flex;
}

.tb-item {
    width: 55px;
    padding-top: 15px;
    position: relative;
    display: flex;
    flex-direction: column;
    align-items: center;
}

.tb-item svg {
    width: 28px;
    height: 28px;
    position: relative;
}

.tb-active::before {
    content: "";
    position: absolute;
    left: 3px;
    right: 4px;
    top: 4px;
    bottom: 5px;
    background-color: rgba(255, 255, 255, 0.08);
    border-radius: 5px;
}

.tb-letter {
    font-family: 'Roboto', sans-serif;
    font-size: 13px;
    font-weight: 700;
    fill: #fff;
}

.tb-mono {
    font-family: 'Liberation Mono', monospace;
    font-size: 11px;
    font-weight: 700;
    fill: #fff;
}

.tb-dot {
    width: 5px;
    height: 5px;
    margin-top: 6px;
    border-radius: 50%;
    background-color: #8a8d90;
}

.tb-bar {
    width: 20px;
    height: 3px;
    margin-top: 7px;
    border-radius: 2px;
    background-color: #60c8f5;
    position: relative;
}

.tray {
    display: flex;
    align-items: center;
    font-size: 15px;
}

.tray-caret {
    margin-left: 84px;
}

.tray-cloud {
    margin-left: 21px;
}

.tray-lang {
    display: flex;
    flex-direction: column;
    align-items: center;
    width: 30px;
    margin-left: 22.5px;
    line-height: 20px;
}

.tray-wifi {
    margin-left: 21.5px;
}

.tray-vol {
    margin-left: 9px;
}

.tray-bat {
    margin-left: 12.5px;
}

.tray-clock {
    display: flex;
    flex-direction: column;
    align-items: flex-end;
    width: 82px;
    margin-left: 14.5px;
    line-height: 20px;
    font-size: 15.3px;
}

.tray-bell {
    margin-left: 9px;
}

.tray-copilot {
    position: relative;
    margin-left: 23px;
    display: flex;
}

.pre {
    position: absolute;
    left: 6px;
    top: 15px;
    background-color: #f5c518;
    color: #222;
    font-size: 9px;
    font-weight: 700;
    padding: 0 2px;
    border-radius: 2px;
}
```
